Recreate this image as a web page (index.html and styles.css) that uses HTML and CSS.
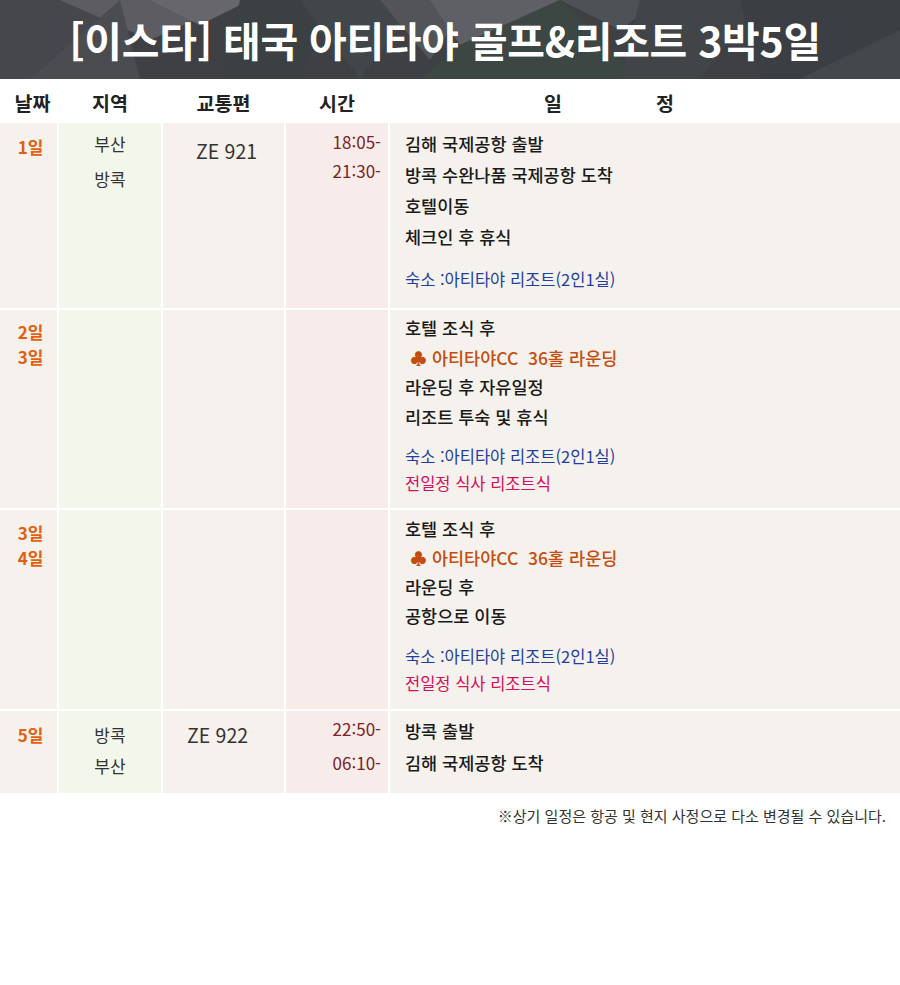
FILE: index.html
```html
<!DOCTYPE html>
<html lang="ko">
<head>
<meta charset="utf-8">
<title>[이스타] 태국 아티타야 골프&amp;리조트 3박5일</title>
<link rel="stylesheet" href="styles.css">
</head>
<body>
<div class="banner">
  <svg class="banner-bg" width="900" height="79" viewBox="0 0 900 79" aria-hidden="true">
    <rect width="900" height="79" fill="#3e4044"/>
    <polygon points="0,0 120,0 40,79 0,79" fill="#45474c"/>
    <polygon points="60,0 240,0 150,40" fill="#5c5c62"/>
    <polygon points="30,79 120,0 140,79" fill="#4a4c50"/>
    <polygon points="150,0 250,0 200,25" fill="#66666c"/>
    <polygon points="240,0 330,0 300,79 220,79" fill="#3b4043"/>
    <polygon points="300,0 420,0 360,79" fill="#41464a"/>
    <polygon points="380,0 470,0 430,60" fill="#52545a"/>
    <polygon points="430,0 560,0 460,45" fill="#5e6066"/>
    <polygon points="460,45 560,0 640,79 420,79" fill="#3c4642"/>
    <polygon points="560,0 660,0 620,30" fill="#4e5156"/>
    <polygon points="640,0 760,0 700,79 620,79" fill="#414548"/>
    <polygon points="740,0 900,0 900,40 800,79 760,79" fill="#3b3e42"/>
    <polygon points="800,79 900,30 900,79" fill="#44474b"/>
  </svg>
  <h1 class="title">[이스타] 태국 아티타야 골프&amp;리조트 3박5일</h1>
</div>

<div class="sched">
  <div class="hcell hday">날짜</div>
  <div class="hcell">지역</div>
  <div class="hcell">교통편</div>
  <div class="hcell">시간</div>
  <div class="hcell hplan"><span>일</span><span>정</span></div>

  <!-- day 1 -->
  <div class="c day d1">1일</div>
  <div class="c area a1"><div>부산</div><div>방콕</div></div>
  <div class="c flight f1">ZE 921</div>
  <div class="c time t1"><div>18:05-</div><div>21:30-</div></div>
  <div class="c plan p1">
    <div class="ln">김해 국제공항 출발</div>
    <div class="ln">방콕 수완나품 국제공항 도착</div>
    <div class="ln">호텔이동</div>
    <div class="ln">체크인 후 휴식</div>
    <div class="note stay s1">숙소 :아티타야 리조트(2인1실)</div>
  </div>

  <!-- day 2-3 -->
  <div class="c day d2"><div>2일</div><div>3일</div></div>
  <div class="c area"></div>
  <div class="c flight"></div>
  <div class="c time"></div>
  <div class="c plan p2">
    <div class="ln">호텔 조식 후</div>
    <div class="ln golf"><span class="club">♣</span> 아티타야CC&nbsp; 36홀 라운딩</div>
    <div class="ln">라운딩 후 자유일정</div>
    <div class="ln">리조트 투숙 및 휴식</div>
    <div class="note stay s2">숙소 :아티타야 리조트(2인1실)</div>
    <div class="note meal">전일정 식사 리조트식</div>
  </div>

  <!-- day 3-4 -->
  <div class="c day d3"><div>3일</div><div>4일</div></div>
  <div class="c area"></div>
  <div class="c flight"></div>
  <div class="c time"></div>
  <div class="c plan p3">
    <div class="ln">호텔 조식 후</div>
    <div class="ln golf"><span class="club">♣</span> 아티타야CC&nbsp; 36홀 라운딩</div>
    <div class="ln">라운딩 후</div>
    <div class="ln">공항으로 이동</div>
    <div class="note stay s3">숙소 :아티타야 리조트(2인1실)</div>
    <div class="note meal">전일정 식사 리조트식</div>
  </div>

  <!-- day 5 -->
  <div class="c day d4">5일</div>
  <div class="c area a4"><div>방콕</div><div>부산</div></div>
  <div class="c flight f4">ZE 922</div>
  <div class="c time t4"><div>22:50-</div><div>06:10-</div></div>
  <div class="c plan p4">
    <div class="ln">방콕 출발</div>
    <div class="ln">김해 국제공항 도착</div>
  </div>
</div>

<p class="footnote">※상기 일정은 항공 및 현지 사정으로 다소 변경될 수 있습니다.</p>
</body>
</html>
```

FILE: styles.css
```css
* { box-sizing: border-box; }
body {
  margin: 0;
  background: #fff;
  font-family: "Noto Sans CJK KR", "Noto Sans", sans-serif;
  color: #1a1a1a;
}
.banner {
  position: relative;
  height: 79px;
  overflow: hidden;
  display: flex;
  align-items: center;
  justify-content: center;
}
.banner-bg {
  position: absolute;
  left: 0;
  top: 0;
}
.title {
  position: relative;
  margin: 0;
  color: #fff;
  font-size: 41px;
  font-weight: 700;
  letter-spacing: -0.3px;
  line-height: 1;
  padding-right: 10px;
  padding-bottom: 1px;
}
.sched {
  display: grid;
  grid-template-columns: 57px 102px 121px 102px 1fr;
  grid-template-rows: 42px 185px 198px 199px 82px;
  column-gap: 2px;
  row-gap: 2px;
  background: #fff;
}
.hcell {
  display: flex;
  align-items: center;
  justify-content: center;
  font-size: 19.5px;
  font-weight: 700;
  color: #222;
  padding-top: 4px;
}
.hday { padding-left: 8px; }
.hplan {
  justify-content: flex-start;
  padding-left: 154px;
  gap: 94px;
}
.c { background: #f6f1ec; }
.area { background: #f3f6eb; }
.flight { background: #f6f1ec; }
.time { background: #f7ecea; }
.plan { background: #f5f1ec; }

.day {
  color: #e2600f;
  font-weight: 700;
  font-size: 17px;
  line-height: 24.6px;
  text-align: center;
  padding-left: 4px;
}
.d1, .d4 { padding-top: 12px; }
.d2 { padding-top: 10px; }
.d3 { padding-top: 11px; }

.area {
  text-align: center;
  font-size: 17px;
  color: #333;
}
.a1 { line-height: 35px; padding-top: 3px; }
.a4 { line-height: 31px; padding-top: 8px; }

.flight {
  text-align: center;
  font-size: 19.5px;
  color: #333;
  line-height: 24px;
}
.f1 { padding-top: 16px; padding-left: 6px; }
.f4 { padding-top: 12px; padding-right: 12px; }

.time {
  text-align: right;
  font-size: 17px;
  color: #7b2323;
  padding-right: 7px;
}
.t1 { line-height: 29px; padding-top: 4px; }
.t4 { line-height: 34px; padding-top: 1px; }

.plan {
  padding-left: 15px;
  font-size: 17.5px;
  font-weight: 500;
  color: #1a1a1a;
}
.p1 { padding-top: 5px; line-height: 31px; }
.p2 { padding-top: 3px; line-height: 29.5px; }
.p3 { padding-top: 4px; line-height: 29px; }
.p4 { padding-top: 4px; line-height: 32px; }

.golf { color: #c44e12; padding-left: 5px; }
.club { font-size: 17px; }
.note { font-size: 16.5px; line-height: 27px; font-weight: 400; }
.stay { color: #1e3f9e; }
.meal { color: #d6105c; }
.s1 { margin-top: 14px; }
.s2 { margin-top: 12px; }
.s3 { margin-top: 13px; }

.footnote {
  margin: 14px 0 0;
  padding-right: 14px;
  text-align: right;
  font-size: 15px;
  line-height: 18px;
  color: #333;
}
```
